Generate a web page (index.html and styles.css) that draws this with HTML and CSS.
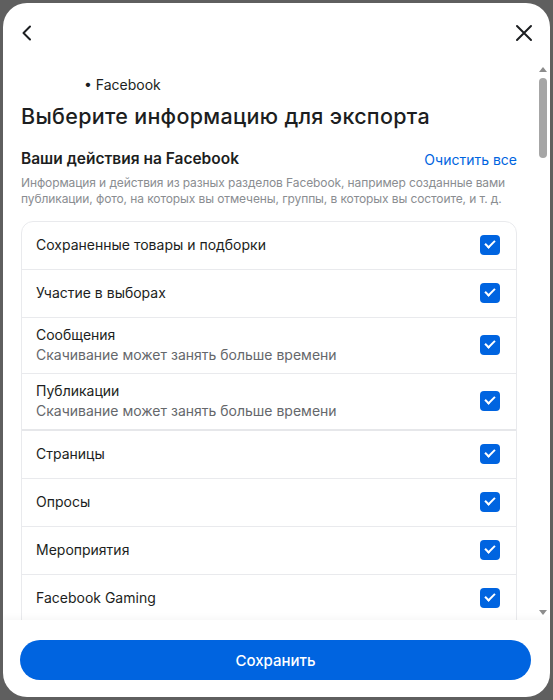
FILE: index.html
```html
<!doctype html>
<html>
 <head>
  <meta charset="utf-8">
  <link rel="stylesheet" href="styles.css">
 </head>
 <body>
  <div class="dialog">
   <!-- top bar -->
   <div class="topbar">
    <button class="icon-btn" aria-label="Назад">
     <svg width="24" height="24" viewBox="0 0 24 24"><path d="M14 5.5 L7.5 12 L14 18.5" fill="none" stroke="#1c1e21" stroke-width="2" stroke-linecap="round" stroke-linejoin="round"/></svg>
    </button>
    <button class="icon-btn" aria-label="Закрыть">
     <svg width="24" height="24" viewBox="0 0 24 24"><path d="M5 5 L19 19 M19 5 L5 19" fill="none" stroke="#1c1e21" stroke-width="2" stroke-linecap="round"/></svg>
    </button>
   </div>

   <div class="content">
    <div class="scroll">
     <div class="crumb"><span class="crumb-name"></span>• Facebook</div>
     <h1 class="title">Выберите информацию для экспорта</h1>

     <div class="section-head">
      <h2>Ваши действия на Facebook</h2>
      <a href="#" class="clear">Очистить все</a>
     </div>
     <p class="desc">Информация и действия из разных разделов Facebook, например созданные вами публикации, фото, на которых вы отмечены, группы, в которых вы состоите, и т. д.</p>

     <div class="card">
      <label class="row"><div class="row-text">Сохраненные товары и подборки</div><span class="check"></span></label>
      <label class="row"><div class="row-text">Участие в выборах</div><span class="check"></span></label>
      <label class="row"><div class="row-text">Сообщения<small>Скачивание может занять больше времени</small></div><span class="check"></span></label>
      <label class="row"><div class="row-text">Публикации<small>Скачивание может занять больше времени</small></div><span class="check"></span></label>
      <label class="row group"><div class="row-text">Страницы</div><span class="check"></span></label>
      <label class="row"><div class="row-text">Опросы</div><span class="check"></span></label>
      <label class="row"><div class="row-text">Мероприятия</div><span class="check"></span></label>
      <label class="row"><div class="row-text">Facebook Gaming</div><span class="check"></span></label>
      <label class="row"><div class="row-text">Группы</div><span class="check"></span></label>
      <label class="row"><div class="row-text">Истории</div><span class="check"></span></label>
      <label class="row"><div class="row-text">Сбор пожертвований</div><span class="check"></span></label>
      <label class="row"><div class="row-text">Reels</div><span class="check"></span></label>
      <label class="row"><div class="row-text">Комментарии и реакции</div><span class="check"></span></label>
      <label class="row"><div class="row-text">Marketplace</div><span class="check"></span></label>
      <label class="row"><div class="row-text">Магазины</div><span class="check"></span></label>
      <label class="row"><div class="row-text">Другие действия</div><span class="check"></span></label>
     </div>

     <div class="section-head">
      <h2>Личная информация</h2>
      <a href="#" class="clear">Очистить все</a>
     </div>
     <p class="desc">Сведения, указанные в профиле, например адрес электронной почты, номер телефона и город.</p>
     <div class="card last">
      <label class="row"><div class="row-text">Информация профиля</div><span class="check"></span></label>
      <label class="row"><div class="row-text">Другая личная информация</div><span class="check"></span></label>
     </div>
    </div>

    <!-- scrollbar column: arrows and thumb -->
    <div class="scrollbar">
     <span class="arrow up"></span>
     <span class="thumb"></span>
     <span class="arrow down"></span>
    </div>
   </div>

   <div class="footer">
    <button class="save">Сохранить</button>
   </div>
  </div>
 </body>
</html>
```

FILE: styles.css
```css
body {
  margin: 0;
  background-color: #5f5f5f;
  font-family: Inter, "Noto Sans", sans-serif;
  color: #1c1e21;
}

.dialog {
  margin: 3px;
  height: 694px;
  background-color: #fff;
  border-radius: 24px;
  display: flex;
  flex-direction: column;
  overflow: hidden;
}

.topbar {
  height: 59px;
  flex: none;
  display: flex;
  justify-content: space-between;
  align-items: center;
  padding: 0 14px 4px 13px;
}

.icon-btn {
  border: none;
  background: none;
  padding: 0;
  width: 24px;
  height: 24px;
  cursor: pointer;
}

.content {
  flex: 1;
  min-height: 0;
  display: flex;
}

.scroll {
  flex: 1;
  overflow-y: auto;
  scrollbar-width: none;
  padding: 10px 18px 0 18px;
}

.scrollbar {
  width: 15px;
  flex: none;
  display: flex;
  flex-direction: column;
  align-items: center;
  padding: 1px 0 5px;
  box-sizing: border-box;
}
.arrow {
  width: 0;
  height: 0;
  border-left: 4.5px solid transparent;
  border-right: 4.5px solid transparent;
}
.arrow.up {
  border-bottom: 5px solid #8c8c8c;
}
.arrow.down {
  margin-top: auto;
  border-top: 5px solid #8c8c8c;
}
.thumb {
  margin-top: 6px;
  width: 8px;
  height: 80px;
  border-radius: 4px;
  background-color: #a6a6a6;
}

.crumb {
  font-size: 14px;
  line-height: 18px;
}
.crumb-name {
  display: inline-block;
  width: 63px;
}

.title {
  margin: 8px 0 0;
  font-size: 21.5px;
  line-height: 28px;
  font-weight: 500;
  letter-spacing: 0.3px;
}

.section-head {
  margin-top: 19px;
  display: flex;
  justify-content: space-between;
  align-items: center;
}
.card + .section-head {
  margin-top: 32px;
}
.section-head h2 {
  margin: 0;
  font-size: 15.5px;
  line-height: 20px;
  font-weight: 600;
}
.clear {
  color: #0064e0;
  text-decoration: none;
  font-size: 14px;
}

.desc {
  margin: 6px 0 14px;
  font-size: 12px;
  line-height: 16px;
  letter-spacing: -0.1px;
  color: #8a8d91;
}

/* list of categories */
.card {
  border: 1px solid #e9eaed;
  border-radius: 12px;
}
.card.last {
  margin-bottom: 20px;
}
.row {
  display: flex;
  align-items: center;
  justify-content: space-between;
  padding: 13px 16px 14px 14px;
  border-top: 1px solid #e9eaed;
  font-size: 14px;
  line-height: 20px;
}
.row:first-child {
  border-top: none;
}
.row.group {
  border-top: 2px solid #e6e7ea;
}
.row-text small {
  display: block;
  font-size: 14px;
  color: #65676b;
}
.row:has(small) {
  padding-top: 7px;
  padding-bottom: 8px;
}

.check {
  width: 20px;
  height: 20px;
  border-radius: 4px;
  background-color: #0064e0;
  position: relative;
  flex: none;
}
.check::after {
  content: "";
  position: absolute;
  left: 5px;
  top: 5px;
  width: 8px;
  height: 4px;
  border-left: 2.5px solid #fff;
  border-bottom: 2.5px solid #fff;
  transform: rotate(-45deg);
}

.footer {
  flex: none;
  padding: 20px 19px 17px 17px;
  box-shadow: 0 -3px 6px rgba(0, 0, 0, 0.03);
}
.save {
  width: 100%;
  height: 40px;
  border: none;
  border-radius: 20px;
  background-color: #0064e0;
  color: #fff;
  font-family: inherit;
  font-size: 15px;
  font-weight: 500;
}
```
